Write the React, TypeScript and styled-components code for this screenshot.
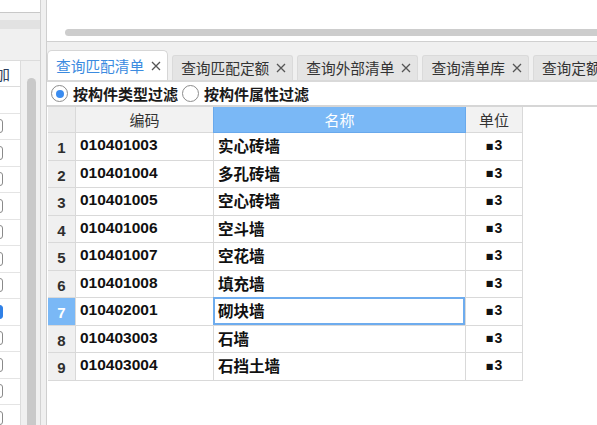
import React from "react";
import styled, { createGlobalStyle } from "styled-components";

const GlobalStyle = createGlobalStyle`
  html, body { margin: 0; padding: 0; background: #f0f0f0; }
  body { font-family: "Liberation Sans", "Noto Sans CJK SC", sans-serif; color: #222; }
`;

const items = [
  { code: "010401003", name: "实心砖墙" },
  { code: "010401004", name: "多孔砖墙" },
  { code: "010401005", name: "空心砖墙" },
  { code: "010401006", name: "空斗墙" },
  { code: "010401007", name: "空花墙" },
  { code: "010401008", name: "填充墙" },
  { code: "010402001", name: "砌块墙" },
  { code: "010403003", name: "石墙" },
  { code: "010403004", name: "石挡土墙" },
];

const tabs = ["查询匹配清单", "查询匹配定额", "查询外部清单", "查询清单库", "查询定额库"];

// left list: first row empty, the 9th one is ticked
const leftRows = [null, false, false, false, false, false, false, false, true, false, false, false, false];

const selectedRow = 6;

export default function App() {
  return (
    <>
      <GlobalStyle />
      <Screen>
        <LeftPanel>
          <LeftTopBox />
          <LeftGap $h={7} />
          <LeftStrip />
          <LeftGap $h={31} />
          <LeftGrid>
            <LeftList>
              <LeftHead>
                <span>添加</span>
              </LeftHead>
              {leftRows.map((checked, i) => (
                <LeftRow key={i}>
                  {checked !== null && <Check $checked={checked} />}
                </LeftRow>
              ))}
            </LeftList>
            <LeftTrack>
              <VThumb />
            </LeftTrack>
          </LeftGrid>
        </LeftPanel>

        <Gutter />

        <MainPanel>
          <TopPane>
            <HThumb />
          </TopPane>

          <TabBar>
            {tabs.map((t, i) => (
              <Tab key={t} $active={i === 0}>
                <span>{t}</span>
                <CloseIcon />
              </Tab>
            ))}
          </TabBar>

          <FilterRow>
            <Radio $on />
            <RadioLabel>按构件类型过滤</RadioLabel>
            <Radio $on={false} />
            <RadioLabel>按构件属性过滤</RadioLabel>
          </FilterRow>

          <GridArea>
            <Grid>
              <HeadCell $kind="num" />
              <HeadCell $kind="plain">编码</HeadCell>
              <HeadCell $kind="active">名称</HeadCell>
              <HeadCell $kind="plain">单位</HeadCell>
              {items.map((it, i) => (
                <React.Fragment key={it.code}>
                  <NumCell $selected={i === selectedRow}>{i + 1}</NumCell>
                  <DataCell>{it.code}</DataCell>
                  <DataCell $focused={i === selectedRow}>{it.name}</DataCell>
                  <UnitCell>
                    <Square>■</Square>3
                  </UnitCell>
                </React.Fragment>
              ))}
            </Grid>
          </GridArea>
        </MainPanel>
      </Screen>
    </>
  );
}

function CloseIcon() {
  return (
    <svg width="10" height="10" viewBox="0 0 10 10" fill="none" stroke="#555" strokeWidth="1.3">
      <path d="M1 1 L9 9 M9 1 L1 9" />
    </svg>
  );
}

const Screen = styled.div`
  display: flex;
  width: 597px;
  height: 425px;
  overflow: hidden;
  background: #f0f0f0;
`;

/* ---------- left panel ---------- */

const LeftPanel = styled.div`
  width: 40px;
  flex-shrink: 0;
  display: flex;
  flex-direction: column;
  border-right: 1px solid #d2d2d2;
`;

const LeftTopBox = styled.div`
  height: 12px;
  background: #fff;
  border-bottom: 1px solid #c8c8c8;
`;

const LeftGap = styled.div<{ $h: number }>`
  height: ${p => p.$h}px;
  background: #f0f0f0;
`;

const LeftStrip = styled.div`
  height: 9px;
  background: #e2e2e2;
`;

const LeftGrid = styled.div`
  flex: 1;
  display: flex;
  border-top: 1px solid #dcdcdc;
  min-height: 0;
`;

const LeftList = styled.div`
  width: 20px;
  background: #fff;
  border-right: 1px solid #dcdcdc;
  overflow: hidden;
`;

const LeftHead = styled.div`
  height: 25px;
  display: flex;
  align-items: center;
  justify-content: flex-end;
  padding-right: 10px;
  overflow: hidden;
  white-space: nowrap;
  font-size: 15px;
  color: #2c3e5e;
  border-bottom: 1px solid #dcdcdc;
`;

const LeftRow = styled.div`
  height: 26.5px;
  box-sizing: border-box;
  display: flex;
  align-items: center;
  border-bottom: 1px solid #e4e4e4;
`;

const Check = styled.div<{ $checked: boolean }>`
  width: 14px;
  height: 14px;
  margin-left: -11px;
  border-radius: 3px;
  box-sizing: border-box;
  border: 1px solid ${p => (p.$checked ? "#2f80e6" : "#8a8a8a")};
  background: ${p => (p.$checked ? "#2f80e6" : "#fff")};
`;

const LeftTrack = styled.div`
  flex: 1;
  display: flex;
  padding-top: 17px;
  background: #f0f0f0;
`;

const VThumb = styled.div`
  width: 9px;
  margin-left: 6px;
  background: #c9c9c9;
  border-radius: 5px 5px 0 0;
`;

const Gutter = styled.div`
  width: 5px;
  flex-shrink: 0;
  background: #f0f0f0;
`;

/* ---------- main panel ---------- */

const MainPanel = styled.div`
  flex: 1;
  min-width: 0;
  display: flex;
  flex-direction: column;
  border-left: 1px solid #cfcfcf;
  background: #f0f0f0;
`;

const TopPane = styled.div`
  height: 42px;
  flex-shrink: 0;
  display: flex;
  align-items: flex-end;
  padding: 0 0 5px 18px;
  box-sizing: border-box;
  background: #fff;
  border-bottom: 1px solid #d0d0d0;
  overflow: hidden;
`;

const HThumb = styled.div`
  flex: 1;
  height: 7px;
  margin-right: -10px;
  background: #cdcdcd;
  border-radius: 4px;
`;

const TabBar = styled.div`
  display: flex;
  align-items: flex-end;
  gap: 4px;
  height: 38px;
  flex-shrink: 0;
  padding-top: 8px;
  box-sizing: border-box;
  overflow: hidden;
  white-space: nowrap;
`;

const Tab = styled.div<{ $active: boolean }>`
  flex-shrink: 0;
  display: flex;
  align-items: center;
  gap: 7px;
  height: ${p => (p.$active ? 30 : 25)}px;
  box-sizing: border-box;
  padding: ${p => (p.$active ? "0 6px 0 8px" : "0 6px 2px 8px")};
  font-size: 14.7px;
  color: ${p => (p.$active ? "#3b8be0" : "#333")};
  background: ${p => (p.$active ? "#fff" : "#e4e4e4")};
  border: 1px solid ${p => (p.$active ? "#d6d6d6" : "#dadada")};
  border-bottom: none;
  border-radius: ${p => (p.$active ? "5px 5px 0 0" : "3px 3px 0 0")};

  svg {
    margin-top: 1px;
  }
`;

const FilterRow = styled.div`
  height: 27px;
  flex-shrink: 0;
  box-sizing: border-box;
  display: flex;
  align-items: center;
  padding-left: 4px;
  background: #fff;
  border-top: 2px solid #d9d9d9;
  border-bottom: 2px solid #d6d6d6;
`;

const Radio = styled.div<{ $on: boolean }>`
  width: 17px;
  height: 17px;
  box-sizing: border-box;
  border-radius: 50%;
  border: 1px solid #8c8c8c;
  background: #fff;
  display: flex;
  align-items: center;
  justify-content: center;
  margin-right: 5px;

  &::after {
    content: "";
    width: 8px;
    height: 8px;
    border-radius: 50%;
    background: ${p => (p.$on ? "#3a8cf0" : "transparent")};
  }
`;

const RadioLabel = styled.span`
  font-size: 15px;
  font-weight: 700;
  color: #1a1a1a;
  margin-right: 4px;
`;

const GridArea = styled.div`
  flex: 1;
  background: #fff;
  padding-left: 1px;
  overflow: hidden;
`;

const Grid = styled.div`
  display: grid;
  grid-template-columns: 28px 138px 252px 57px;
  grid-template-rows: 26px repeat(9, 27.5px);
  width: 475px;
`;

const cellBase = `
  box-sizing: border-box;
  border-right: 1px solid #d9d9d9;
  border-bottom: 1px solid #d9d9d9;
  display: flex;
  align-items: center;
  overflow: hidden;
  white-space: nowrap;
`;

const HeadCell = styled.div<{ $kind: "num" | "plain" | "active" }>`
  ${cellBase}
  justify-content: center;
  font-size: 15px;
  color: ${p => (p.$kind === "active" ? "#fff" : "#333")};
  background: ${p => (p.$kind === "active" ? "#7ab8f6" : p.$kind === "num" ? "#ececec" : "#f2f2f2")};
  ${p => p.$kind === "active" && "border-color: #69a9ec; border-left: 1px solid #69a9ec; margin-left: -1px;"}
`;

const NumCell = styled.div<{ $selected: boolean }>`
  ${cellBase}
  justify-content: center;
  padding-top: 3px;
  font-size: 15px;
  font-weight: 700;
  color: ${p => (p.$selected ? "#fff" : "#2e2e2e")};
  background: ${p => (p.$selected ? "#7ab8f6" : "#f0f0f0")};
`;

const DataCell = styled.div<{ $focused?: boolean }>`
  ${cellBase}
  padding: 0 0 2px 4px;
  font-size: 15.5px;
  font-weight: 700;
  color: #111;
  box-shadow: ${p => (p.$focused ? "inset 0 0 0 2px #6eacee" : "none")};
  ${p => p.$focused && "margin: -1px 0 0 -1px; padding-left: 5px; padding-top: 1px;"}
`;

const UnitCell = styled.div`
  ${cellBase}
  justify-content: center;
  padding-bottom: 2px;
  font-size: 14px;
  font-weight: 700;
  color: #111;
`;

const Square = styled.span`
  font-family: "DejaVu Sans", sans-serif;
  font-size: 8px;
  margin-right: 1px;
  position: relative;
  top: 1px;
`;
